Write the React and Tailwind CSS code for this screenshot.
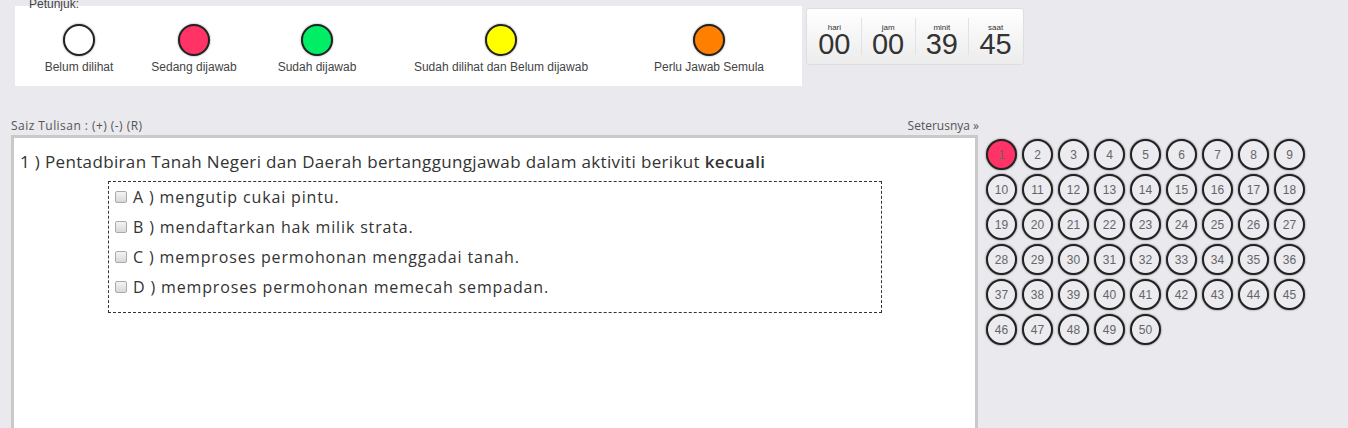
import React from "react";

const legend = [
  { label: "Belum dilihat", color: "bg-white", width: "w-[98px]" },
  { label: "Sedang dijawab", color: "bg-[#ff3366]", width: "w-[132px]" },
  { label: "Sudah dijawab", color: "bg-[#00ee66]", width: "w-[114px]" },
  { label: "Sudah dilihat dan Belum dijawab", color: "bg-[#ffff00]", width: "w-[254px]" },
  { label: "Perlu Jawab Semula", color: "bg-[#ff8000]", width: "w-[162px]" },
];

const timer = [
  { label: "hari", value: "00" },
  { label: "jam", value: "00" },
  { label: "minit", value: "39" },
  { label: "saat", value: "45" },
];

const options = [
  "A ) mengutip cukai pintu.",
  "B ) mendaftarkan hak milik strata.",
  "C ) memproses permohonan menggadai tanah.",
  "D ) memproses permohonan memecah sempadan.",
];

const App = () => {
  const numbers = Array.from({ length: 50 }, (_, i) => i + 1);

  return (
    <div className="h-[428px] overflow-hidden bg-[#e9e9ee] font-['Liberation_Sans',Arial,sans-serif]">
      {/* TOP: LEGEND + TIMER */}
      <div className="flex items-start">
        <div className="relative ml-[15px] mt-[6px] h-[80px] w-[787px] bg-white pl-[15px]">
          <span className="absolute -top-[9px] left-[14px] text-[12px] leading-[14px] text-[#444]">
            Petunjuk:
          </span>
          <div className="flex">
            {legend.map((l) => (
              <div key={l.label} className={`${l.width} flex flex-col items-center pt-[18px]`}>
                <div
                  className={`h-[32px] w-[32px] rounded-full border-2 border-[#222] ${l.color} shadow-[0_0_2px_rgba(0,0,0,0.5)]`}
                />
                <span className="mt-[4px] whitespace-nowrap text-[12px] leading-[14px] text-[#444]">
                  {l.label}
                </span>
              </div>
            ))}
          </div>
        </div>

        <div className="ml-[4px] mt-[8px] flex h-[57px] w-[218px] rounded-[3px] border border-[#dedede] bg-gradient-to-b from-white to-[#ececec] px-[1px] py-[9px]">
          {timer.map((t, idx) => (
            <div
              key={t.label}
              className={`flex flex-1 flex-col items-center pt-[5px] ${idx < 3 ? "border-r border-[#e2e2e2]" : ""}`}
            >
              <span className="text-[8px] leading-[9px] text-[#333]">{t.label}</span>
              <span className="text-[29px] leading-[24px] text-[#333]">{t.value}</span>
            </div>
          ))}
        </div>
      </div>

      {/* MAIN: QUESTION + NAVIGATOR */}
      <div className="mt-[30px] flex items-start font-['Open_Sans',sans-serif]">
        <div className="ml-[11px] w-[967px]">
          <div className="flex h-[19px] items-center justify-between text-[12px] text-[#555]">
            <span className="tracking-[0.45px]">Saiz Tulisan : (+) (-) (R)</span>
            <span className="mr-[-1px]">Seterusnya »</span>
          </div>
          <div className="h-[300px] border-[3px] border-[#c9c9c9] bg-white px-[6px] pt-[12px]">
            <p className="text-[17px] leading-[23px] tracking-[0.35px] text-[#333]">
              1 ) Pentadbiran Tanah Negeri dan Daerah bertanggungjawab dalam aktiviti berikut{" "}
              <b className="font-semibold">kecuali</b>
            </p>
            <div className="ml-[88px] mt-[8px] w-[774px] border border-dashed border-[#333] pb-[10px]">
              {options.map((o) => (
                <label key={o} className="flex h-[30px] items-center pl-[6px]">
                  <span className="h-[12px] w-[12px] rounded-[2px] border border-[#aaa] bg-gradient-to-b from-[#f4f4f4] to-[#d8d8d8]" />
                  <span className="ml-[6px] text-[16px] tracking-[0.85px] text-[#333]">{o}</span>
                </label>
              ))}
            </div>
          </div>
        </div>

        <div className="ml-[8px] mt-[23px] flex w-[330px] flex-wrap font-['Liberation_Sans',Arial,sans-serif]">
          {numbers.map((n) => (
            <div
              key={n}
              className={`mb-[4px] mr-[5px] flex h-[31px] w-[31px] items-center justify-center rounded-full border-2 border-[#222] text-[12px] text-[#666] shadow-[0_0_2px_rgba(0,0,0,0.6)] ${
                n === 1 ? "bg-[#ff3366]" : "bg-[#ebebf0]"
              }`}
            >
              {n}
            </div>
          ))}
        </div>
      </div>
    </div>
  );
};

export default App;
